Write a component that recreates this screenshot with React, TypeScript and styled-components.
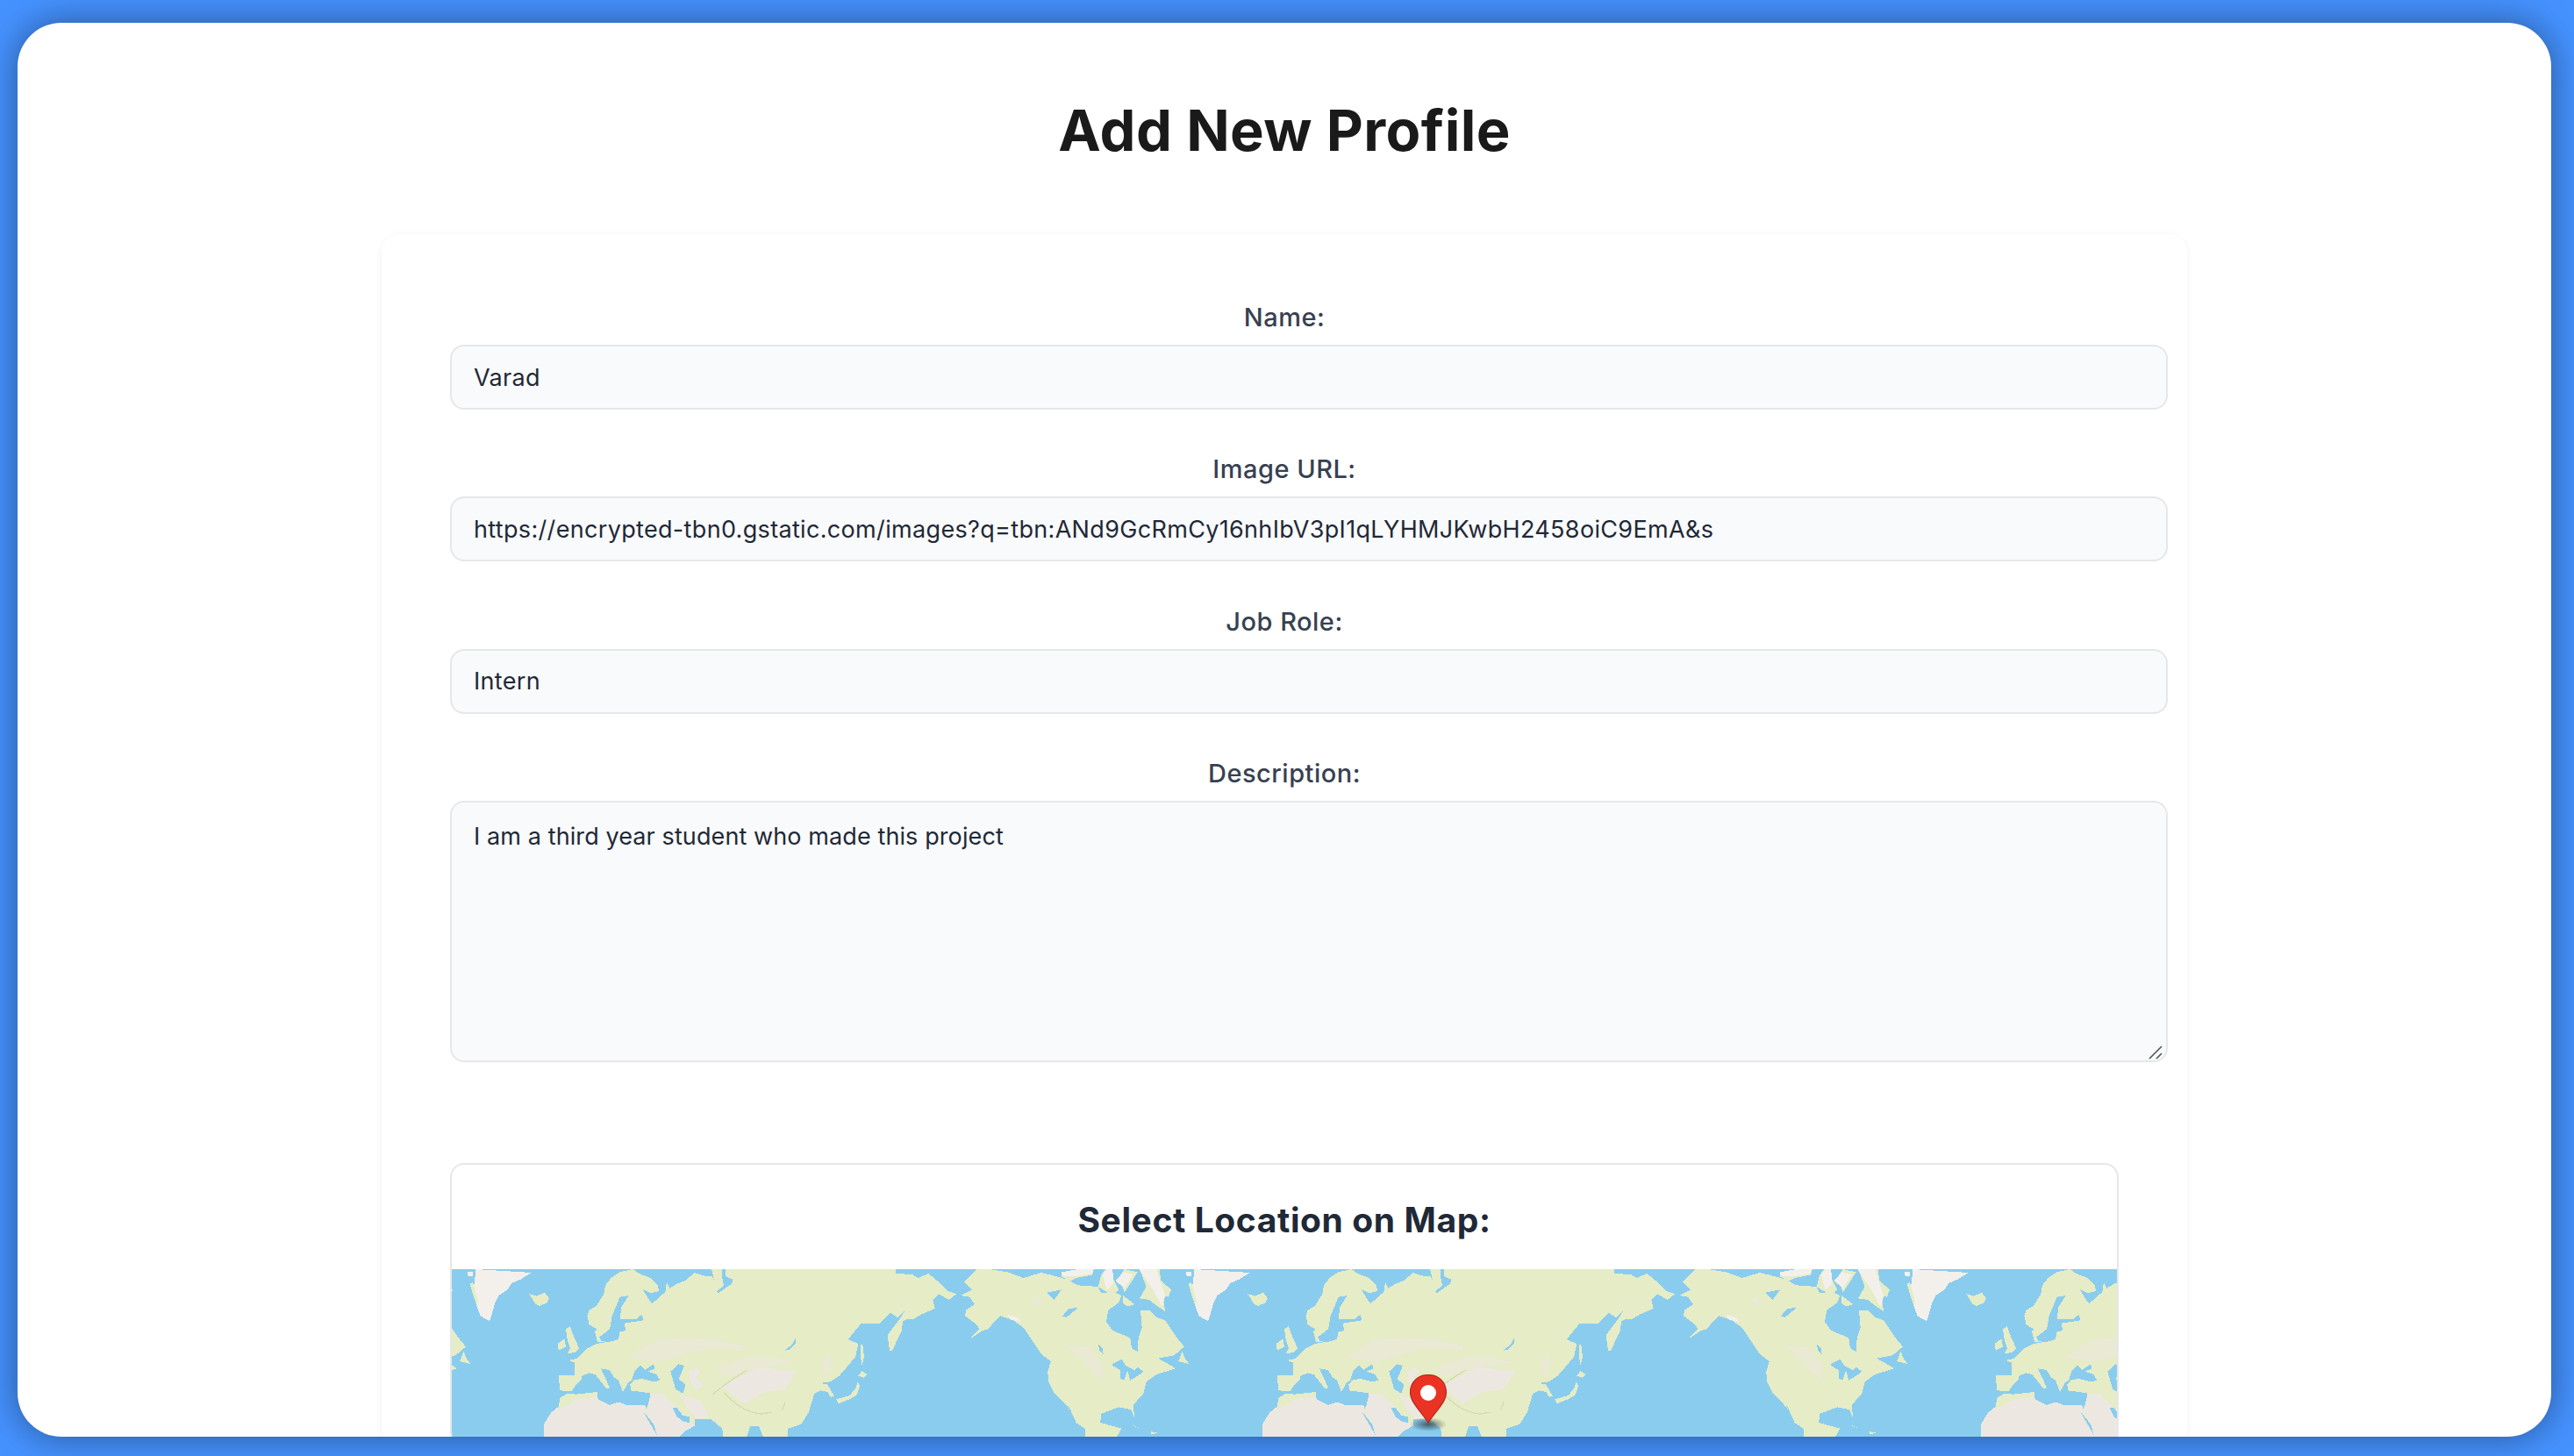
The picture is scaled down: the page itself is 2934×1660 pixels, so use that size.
import React from "react";
import styled, { createGlobalStyle } from "styled-components";

const Global = createGlobalStyle`
  html, body { margin: 0; padding: 0; height: 1660px; overflow: hidden; background: #4592ff; }
  #root { height: 1660px; }
  * { font-family: Inter, "Liberation Sans", sans-serif; }
`;

const Frame = styled.div`
  box-sizing: border-box;
  height: 1660px;
  padding: 26px 26px 22px 20px;
  display: flex;
  background: #4592ff;
`;

const Win = styled.main`
  flex: 1;
  background: #fff;
  border-radius: 50px;
  overflow: hidden;
  box-shadow: 0 0 42px rgba(0, 0, 0, 0.42);
  padding-top: 84px;
  display: flex;
  flex-direction: column;
  align-items: center;
`;

const Title = styled.h1`
  margin: 0 0 80px;
  font-size: 65px;
  line-height: 77px;
  font-weight: 700;
  letter-spacing: 0.4px;
  color: #1a1a1a;
  text-align: center;
`;

const Card = styled.form`
  box-sizing: border-box;
  width: 2058px;
  flex-shrink: 0;
  padding: 78px 78px 0;
  border-radius: 20px;
  background: #fff;
  box-shadow: 0 2px 8px rgba(0, 0, 0, 0.06);
`;

const Field = styled.div`
  margin-bottom: 51.4px;
`;

const Label = styled.label`
  display: block;
  margin-bottom: 14px;
  font-size: 29px;
  line-height: 34px;
  font-weight: 500;
  letter-spacing: 0.5px;
  color: #374151;
  text-align: center;
`;

const fieldCss = `
  display: block;
  box-sizing: content-box;
  width: 100%;
  padding: 0 27px 0 25px;
  border: 2px solid #e5e7eb;
  border-radius: 16px;
  background: #f9fafb;
  color: #1f2937;
  font-size: 27px;
  letter-spacing: 0.33px;
  outline: none;
`;

const TextInput = styled.input`
  ${fieldCss}
  height: 70px;
`;

const AreaWrap = styled.div`
  position: relative;
`;

const TextArea = styled.textarea`
  ${fieldCss}
  height: 250px;
  padding-top: 22px;
  padding-bottom: 22px;
  line-height: 34px;
  letter-spacing: 0.1px;
  resize: none;
  margin: 0;
`;

const Grip = styled.svg`
  position: absolute;
  right: -50px;
  bottom: 3px;
  width: 16px;
  height: 16px;
`;

const MapPanel = styled.section`
  box-sizing: border-box;
  width: 100%;
  margin-top: 115px;
  border: 2px solid #e5e7eb;
  border-radius: 16px;
  overflow: hidden;
  background: #fff;
`;

const MapTitle = styled.h2`
  box-sizing: border-box;
  margin: 0;
  height: 119px;
  padding-top: 6px;
  display: flex;
  align-items: center;
  justify-content: center;
  font-size: 39px;
  font-weight: 700;
  letter-spacing: 0.6px;
  color: #1f2937;
`;

const MapCanvas = styled.div`
  position: relative;
  height: 200px;
  background: #8accee;
  overflow: hidden;
`;

const MapArt = styled.svg`
  display: block;
  width: 1898px;
  height: 200px;
`;

const Pin = styled.svg`
  position: absolute;
  left: 1075px;
  top: 120px;
  width: 60px;
  height: 66px;
`;

const OCEAN = "#8accee";
const LAND = "#e5ecc6";
const PALE = "#e9e9d4";
const SAND = "#ece8e1";
const ICE = "#f3f0eb";

const land = [
  // Eurasia
  "463,160 470,140 495,125 520,85 525,55 545,30 575,10 620,0 640,15 680,30 705,55 708,75 680,82 655,70 668,95 685,118 705,100 730,78 735,45 745,65 770,50 800,38 830,12 860,22 890,25 898,42 888,0 1518,0 1518,15 1575,18 1595,30 1630,15 1660,40 1695,75 1725,85 1700,105 1665,85 1645,105 1652,135 1605,155 1580,170 1555,172 1543,178 1537,215 1505,280 1497,280 1490,225 1505,205 1535,165 1550,140 1525,165 1500,150 1465,185 1400,185 1355,240 1390,255 1380,300 1355,330 1325,365 1295,385 1260,390 1285,395 1308,435 1295,437 1285,420 1260,415 1240,425 1220,490 1195,530 1150,545 1145,600 1075,600 1050,537 1020,537 1000,600 930,600 925,545 885,512 832,512 832,535 800,553 750,600 712,600 690,530 660,493 672,460 680,425 650,420 612,415 610,395 625,378 605,385 585,420 570,380 555,370 540,345 510,340 540,405 530,410 490,360 470,355 445,365 445,375 425,395 410,418 370,415 365,362 420,362 420,320 400,312 430,305 465,270 495,255 525,250 498,250 488,210 498,210 505,232 495,205 470,190",
  // UK, Ireland, Iceland
  "390,205 405,195 415,225 435,270 420,285 395,290 405,270 395,240",
  "362,255 385,238 390,265 365,278",
  "265,85 290,92 318,80 333,100 325,115 300,126 285,118 275,100",
  // Sakhalin, Hokkaido, Honshu
  "1398,258 1405,258 1410,300 1403,330 1398,300",
  "1390,365 1402,348 1420,360 1410,372",
  "1315,445 1360,432 1380,410 1388,385 1395,400 1385,430 1360,445 1322,460",
  // North America
  "1752,45 1785,10 1795,0 1840,0 1900,10 1955,30 2015,12 2050,20 2105,35 2140,55 2210,60 2220,80 2270,80 2290,90 2280,115 2245,140 2238,180 2260,210 2320,235 2325,270 2345,282 2348,235 2360,200 2355,142 2385,140 2410,165 2440,175 2480,235 2505,265 2470,295 2415,305 2460,330 2475,340 2410,360 2375,385 2365,425 2330,465 2335,510 2322,480 2280,472 2220,495 2218,525 2290,545 2260,600 2170,600 2165,545 2135,525 2105,470 2090,455 2060,425 2040,385 2038,350 2048,315 2015,290 1985,245 1955,200 1920,175 1875,160 1850,185 1835,205 1815,210 1770,240 1805,205 1795,190 1755,160 1758,140 1788,120 1770,95 1740,90 1780,70",
  // Newfoundland, Cuba, arctic
  "2485,315 2497,280 2507,305 2522,325",
  "2320,530 2370,550 2340,540",
  "2390,555 2415,560 2390,565",
  "2085,10 2140,0 2195,0 2190,20 2135,30 2115,40 2085,25",
  "2220,20 2235,0 2260,0 2260,30 2280,70 2260,90 2210,60",
  "2280,30 2300,0 2345,10 2320,50 2300,80 2290,50",
  "2350,0 2420,0 2425,40 2460,70 2450,95 2430,90 2440,145 2410,125 2385,105 2352,100 2375,60 2360,20",
  "2295,90 2335,120 2310,128 2295,115",
];

const sand = [
  "680,425 720,425 770,475 832,535 800,553 750,600 712,600 690,530 665,493 672,460",
  "780,430 850,450 880,510 835,512 810,480",
  "925,400 1050,335 1180,350 1140,410 1070,420 1000,460 960,430",
  "810,350 835,335 850,350 835,370 862,400 835,412 815,385",
];

const pale = [
  "600,300 700,240 800,235 900,240 1000,260 1000,280 900,270 800,290 700,320",
  "1265,310 1295,295 1300,340 1270,365",
  "2105,260 2180,265 2230,330 2230,385 2190,350",
  "1980,95 2010,100 2020,130 1995,120",
  "1000,300 1100,300 1180,320 1050,335 950,370 900,340",
];

const water = [
  // Baltic, Ob, Black sea, Caspian, Baikal, Persian Gulf
  "505,232 540,205 548,160 575,95 605,90 580,130 575,170 630,172 650,155 655,175 590,185 595,210 575,215 570,240 535,250 510,245",
  "923,0 935,0 937,25 960,35 958,50 935,65 912,82 905,78 930,55 925,30",
  "615,380 625,350 645,330 660,345 690,325 695,340 670,350 700,360 712,380 690,385 650,375",
  "748,350 775,325 795,330 785,355 775,375 800,395 790,425 765,410",
  "1140,278 1165,255 1178,232 1175,255 1155,275",
  "755,475 770,475 790,500 812,505 812,525 790,520 770,505",
  // Baja, Great Lakes, Great Bear, Great Slave, Winnipeg
  "2105,465 2130,525 2135,525 2110,470",
  "2258,325 2290,308 2305,330 2335,345 2345,335 2365,350 2345,365 2320,380 2310,345 2300,378 2285,375 2285,345 2260,330",
  "2035,80 2085,70 2060,105",
  "2088,160 2110,135 2140,132 2115,155 2100,165",
  "2210,255 2225,270 2228,292 2215,280",
];

const ice = [
  "82,0 272,12 235,35 205,48 190,70 160,90 148,115 138,150 130,177 118,172 98,160 85,125 72,85 80,25",
  "55,10 72,10 72,25 55,22",
  "2085,10 2140,0 2195,0 2190,15 2135,25 2085,22",
  "2225,20 2240,0 2260,0 2262,50 2240,70",
  "2350,0 2410,0 2425,50 2440,90 2430,130 2400,75",
  "2270,40 2300,10 2330,20 2300,65",
  "1900,155 1935,165 1945,180 1910,172",
];

const greenCoast = ["62,50 72,45 90,110 85,125 72,85"];

const africa = "315,600 315,530 340,490 365,470 370,440 395,425 425,428 497,420 500,445 540,465 570,455 600,465 660,465 670,490 658,493 720,600";
const africaNorth = "365,480 370,440 395,425 425,428 497,420 497,435 430,445";

const Polys = ({ items, fill }: { items: string[]; fill: string }) => (
  <>
    {items.map((p, i) => (
      <polygon key={i} points={p} fill={fill} />
    ))}
  </>
);

const World = () => (
  <>
    <polygon points={africa} fill={SAND} />
    <polygon points={africaNorth} fill={LAND} />
    <Polys items={land} fill={LAND} />
    <Polys items={pale} fill={PALE} />
    <Polys items={sand} fill={SAND} />
    <Polys items={ice} fill={ICE} />
    <Polys items={greenCoast} fill={LAND} />
    <Polys items={water} fill={OCEAN} />
    <path
      d="M930 420 Q990 490 1060 495 Q1085 490 1095 490 M890 430 Q950 380 1010 345 M1130 480 L1140 455"
      fill="none"
      stroke="#d5dab0"
      strokeWidth="4"
    />
  </>
);

const MapDrawing = () => (
  <MapArt viewBox="0 0 5694 600" preserveAspectRatio="none" shapeRendering="crispEdges">
    {[-1, 0, 1, 2].map((k) => (
      <g key={k} transform={`translate(${k * 2457} 0)`}>
        <World />
      </g>
    ))}
  </MapArt>
);

const Marker = () => (
  <Pin viewBox="0 0 60 66">
    <defs>
      <radialGradient id="pinShade">
        <stop offset="0" stopColor="#2b3a3a" stopOpacity="0.75" />
        <stop offset="1" stopColor="#2b3a3a" stopOpacity="0" />
      </radialGradient>
    </defs>
    <ellipse cx="38" cy="57" rx="21" ry="8" fill="url(#pinShade)" />
    <path
      d="M38 0.5 C26 0.5 17.5 9 17.5 20.5 C17.5 32 30 42 38 55 C46 42 58.5 32 58.5 20.5 C58.5 9 50 0.5 38 0.5 Z"
      fill="#ea3323"
      stroke="#b5281c"
      strokeWidth="1.2"
    />
    <circle cx="38" cy="21" r="9" fill="#fff" />
  </Pin>
);

export default function App() {
  return (
    <Frame>
      <Global />
      <Win>
        <Title>Add New Profile</Title>
        <Card>
          <Field>
            <Label>Name:</Label>
            <TextInput defaultValue="Varad" />
          </Field>
          <Field>
            <Label>Image URL:</Label>
            <TextInput defaultValue="https://encrypted-tbn0.gstatic.com/images?q=tbn:ANd9GcRmCy16nhIbV3pI1qLYHMJKwbH2458oiC9EmA&s" />
          </Field>
          <Field>
            <Label>Job Role:</Label>
            <TextInput defaultValue="Intern" />
          </Field>
          <Label>Description:</Label>
          <AreaWrap>
            <TextArea defaultValue="I am a third year student who made this project" />
            <Grip viewBox="0 0 16 16">
              <path d="M1 15 L15 1 M9 15 L15 9" stroke="#555" strokeWidth="1.6" fill="none" />
            </Grip>
          </AreaWrap>
          <MapPanel>
            <MapTitle>Select Location on Map:</MapTitle>
            <MapCanvas>
              <MapDrawing />
              <Marker />
            </MapCanvas>
          </MapPanel>
        </Card>
      </Win>
    </Frame>
  );
}
